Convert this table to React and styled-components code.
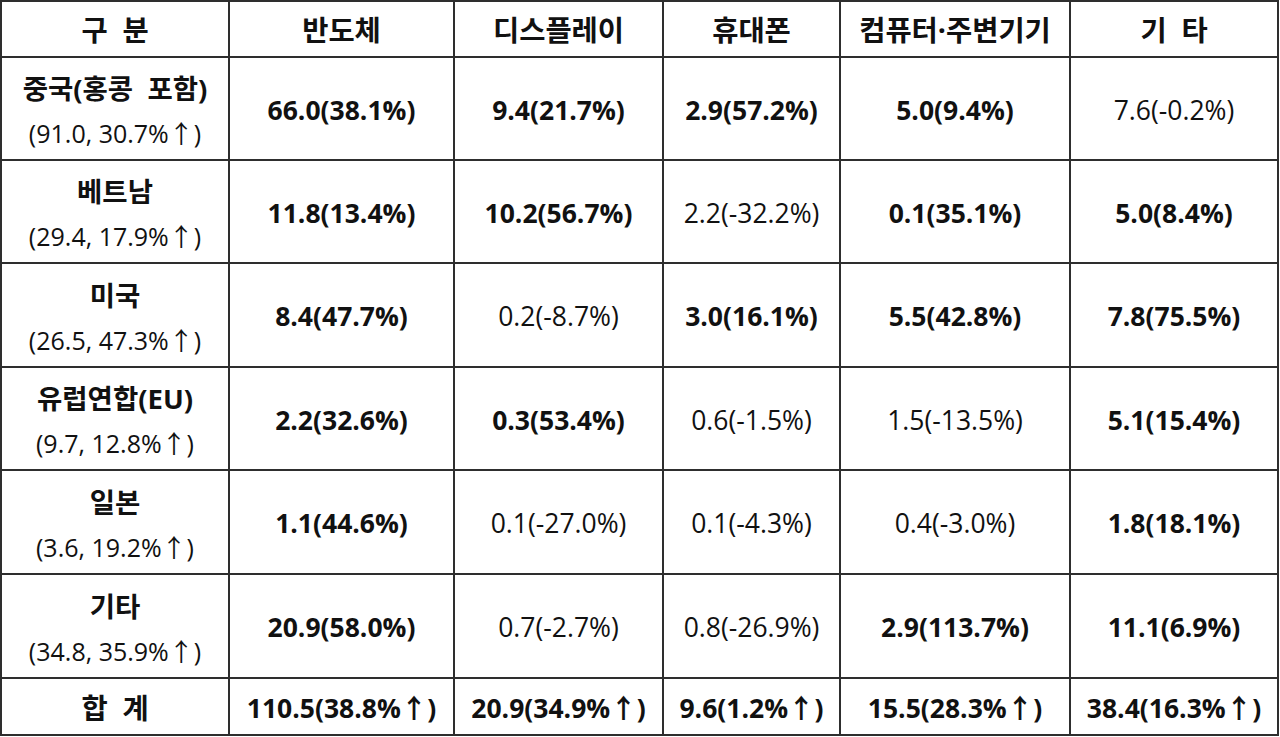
import React from 'react'
import styled, { createGlobalStyle } from 'styled-components'

const GlobalStyle = createGlobalStyle`
  body {
    margin: 0;
    background: #fff;
    font-family: "Open Sans", "Noto Sans CJK KR", sans-serif;
    color: #111;
  }
`

const headers = ['구  분', '반도체', '디스플레이', '휴대폰', '컴퓨터·주변기기', '기  타']

// each value: [text, bold]
const rows = [
  {
    name: '중국(홍콩  포함)',
    sub: '(91.0, 30.7%↑)',
    cells: [['66.0(38.1%)', 1], ['9.4(21.7%)', 1], ['2.9(57.2%)', 1], ['5.0(9.4%)', 1], ['7.6(-0.2%)', 0]],
  },
  {
    name: '베트남',
    sub: '(29.4, 17.9%↑)',
    cells: [['11.8(13.4%)', 1], ['10.2(56.7%)', 1], ['2.2(-32.2%)', 0], ['0.1(35.1%)', 1], ['5.0(8.4%)', 1]],
  },
  {
    name: '미국',
    sub: '(26.5, 47.3%↑)',
    cells: [['8.4(47.7%)', 1], ['0.2(-8.7%)', 0], ['3.0(16.1%)', 1], ['5.5(42.8%)', 1], ['7.8(75.5%)', 1]],
  },
  {
    name: '유럽연합(EU)',
    sub: '(9.7, 12.8%↑)',
    cells: [['2.2(32.6%)', 1], ['0.3(53.4%)', 1], ['0.6(-1.5%)', 0], ['1.5(-13.5%)', 0], ['5.1(15.4%)', 1]],
  },
  {
    name: '일본',
    sub: '(3.6, 19.2%↑)',
    cells: [['1.1(44.6%)', 1], ['0.1(-27.0%)', 0], ['0.1(-4.3%)', 0], ['0.4(-3.0%)', 0], ['1.8(18.1%)', 1]],
  },
  {
    name: '기타',
    sub: '(34.8, 35.9%↑)',
    cells: [['20.9(58.0%)', 1], ['0.7(-2.7%)', 0], ['0.8(-26.9%)', 0], ['2.9(113.7%)', 1], ['11.1(6.9%)', 1]],
  },
]

const totals = ['110.5(38.8%↑)', '20.9(34.9%↑)', '9.6(1.2%↑)', '15.5(28.3%↑)', '38.4(16.3%↑)']

const App = () => {
  return (
    <>
      <GlobalStyle />
      <Grid>
        {headers.map((h) => (
          <Cell key={h} bold size={28.5}>{h}</Cell>
        ))}
        {rows.map((r) => (
          <React.Fragment key={r.name}>
            <NameCell>
              <Name>{r.name}</Name>
              <Sub>{r.sub}</Sub>
            </NameCell>
            {r.cells.map(([t, b], i) => (
              <Cell key={i} bold={b}>{t}</Cell>
            ))}
          </React.Fragment>
        ))}
        <Cell bold size={28.5}>합  계</Cell>
        {totals.map((t) => (
          <Cell key={t} bold>{t}</Cell>
        ))}
      </Grid>
    </>
  )
}

export default App

const Grid = styled.div`
  display: grid;
  width: 1279px;
  grid-template-columns: 226px 223px 207px 175px 228px 206px;
  grid-template-rows: 54px 101px 101px 102px 101px 102px 102px 55px;
  gap: 2px;
  padding: 2px;
  box-sizing: border-box;
  background: #2e2e2e;
`

const Cell = styled.div`
  background: #fff;
  display: flex;
  align-items: center;
  justify-content: center;
  font-size: ${(p) => p.size || 26.5}px;
  font-weight: ${(p) => (p.bold ? 700 : 400)};
  white-space: pre;
  line-height: 1;
  padding-top: 3px;
`

const NameCell = styled.div`
  background: #fff;
  display: flex;
  flex-direction: column;
  align-items: center;
  justify-content: center;
  gap: 10px;
  padding-top: 4px;
  font-size: 26.5px;
  line-height: 1.35;
`

const Name = styled.div`
  font-weight: 700;
  white-space: pre;
  font-size: 27.5px;
`

const Sub = styled.div`
  font-weight: 400;
  white-space: pre;
  font-size: 25px;
`
